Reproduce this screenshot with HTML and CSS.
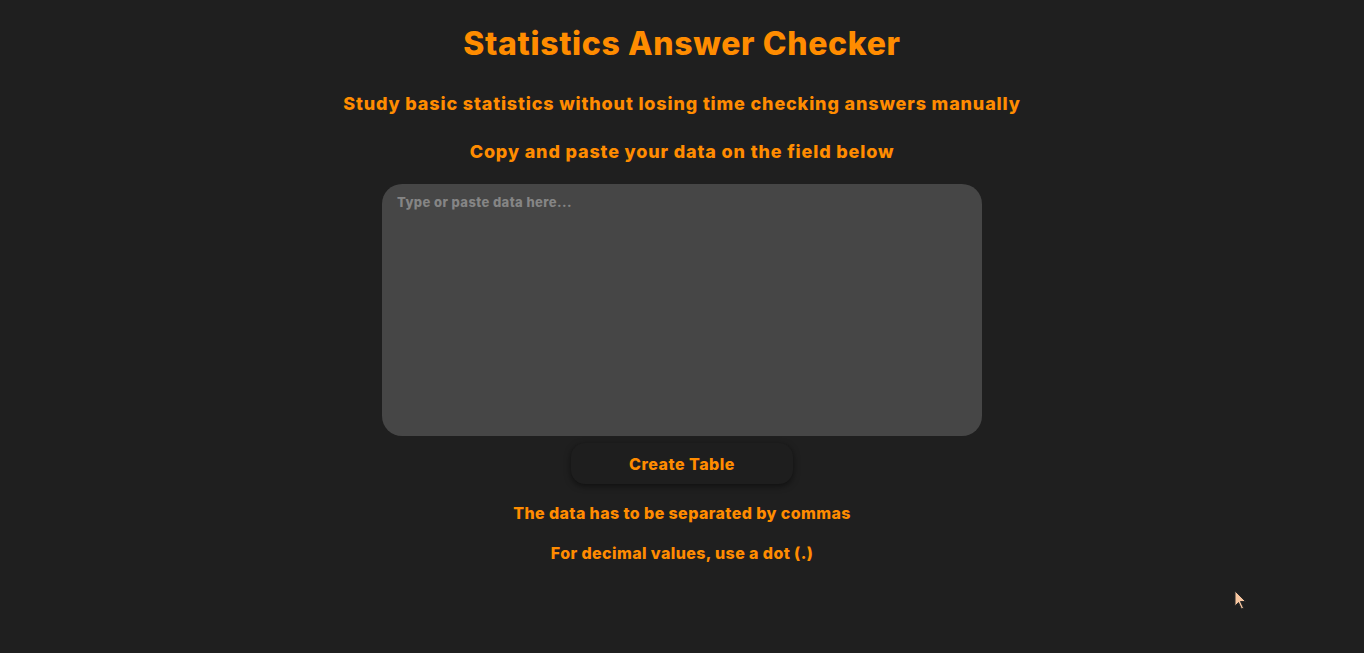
FILE: index.html
```html
<!DOCTYPE html>
<html lang="en">
<head>
<meta charset="utf-8">
<title>Statistics Answer Checker</title>
<link rel="stylesheet" href="styles.css">
</head>
<body>
<main class="page">
  <h1 class="title">Statistics Answer Checker</h1>
  <p class="subtitle">Study basic statistics without losing time checking answers manually</p>
  <p class="subtitle">Copy and paste your data on the field below</p>
  <textarea class="data-field" placeholder="Type or paste data here..."></textarea>
  <button class="create-btn" type="button">Create Table</button>
  <p class="note">The data has to be separated by commas</p>
  <p class="note">For decimal values, use a dot (.)</p>
</main>
<svg class="cursor" width="14" height="20" viewBox="0 0 14 20" aria-hidden="true">
  <path d="M1 1 L1 16 L4.5 12.5 L7.5 19 L9.5 18 L6.5 11.5 L11.5 11.5 Z" fill="#f7c6a0" stroke="#2a2a2a" stroke-width="1"/>
</svg>
</body>
</html>
```
FILE: styles.css
```css
html, body {
  margin: 0;
  padding: 0;
  background: #1f1f1f;
  height: 100%;
}
body {
  font-family: "Inter", "Liberation Sans", sans-serif;
  color: #ff8c00;
  overflow: hidden;
}
.page {
  display: flex;
  flex-direction: column;
  align-items: center;
  padding-top: 23px;
}
.title {
  margin: 0;
  font-size: 32px;
  font-weight: 800;
  line-height: 42px;
  letter-spacing: 0.65px;
}
.subtitle {
  margin: 0;
  font-size: 18px;
  font-weight: 800;
  line-height: 24px;
  letter-spacing: 0.85px;
}
.title + .subtitle { margin-top: 27px; }
.subtitle + .subtitle { margin-top: 24px; }
.data-field {
  box-sizing: border-box;
  margin-top: 20px;
  width: 600px;
  height: 252px;
  background: #464646;
  border: none;
  border-radius: 20px;
  padding: 10px 15px;
  resize: none;
  outline: none;
  font-family: inherit;
  font-weight: 800;
  font-size: 13px;
  letter-spacing: 0.4px;
  color: #ddd;
}
.data-field::placeholder { color: #858585; }
.create-btn {
  margin-top: 7px;
  width: 222px;
  height: 41px;
  border: none;
  border-radius: 14px;
  background: #1e1e1e;
  box-shadow: 0 2px 6px rgba(0,0,0,0.5);
  color: #ff8c00;
  font-family: inherit;
  font-weight: 800;
  font-size: 16px;
  letter-spacing: 0.5px;
  cursor: pointer;
}
.note {
  margin: 0;
  font-size: 16px;
  font-weight: 800;
  line-height: 22px;
  letter-spacing: 0.4px;
}
.create-btn + .note { margin-top: 18px; }
.note + .note { margin-top: 18px; }
.cursor {
  position: absolute;
  left: 1234px;
  top: 590px;
}
```
